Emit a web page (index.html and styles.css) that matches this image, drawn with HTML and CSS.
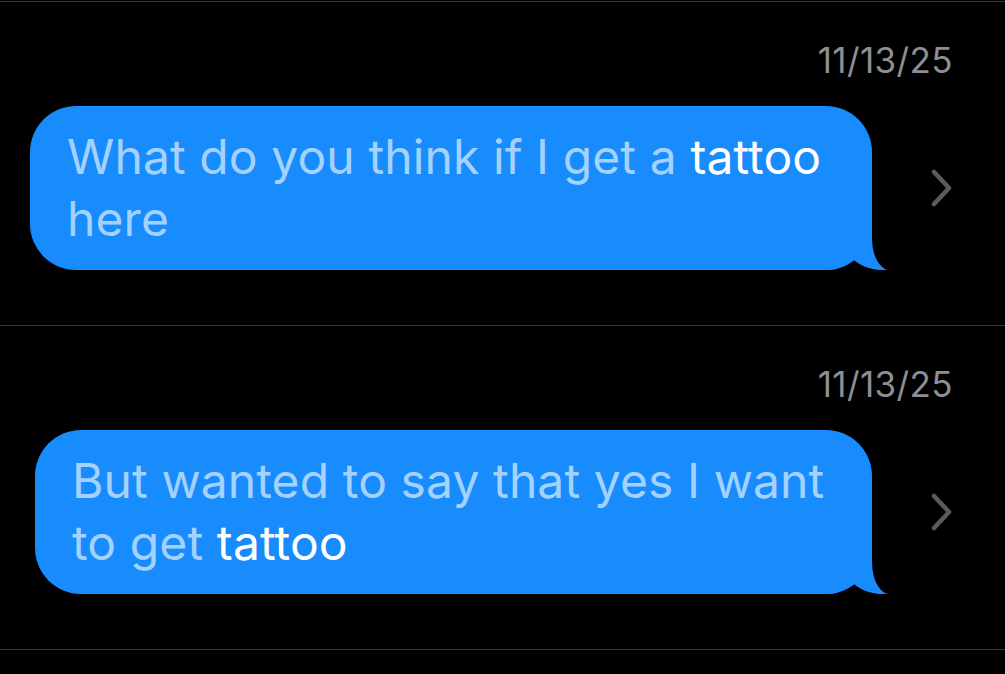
FILE: index.html
```html
<html>
<head>
<title>Messages</title>
<link rel="stylesheet" href="styles.css">
</head>
<body>

<div id="thread">

	<div class="row">
		<div class="date">11/13/25</div>
		<div class="line">
			<div class="bubble">
				What do you think if I get a <span class="hilite">tattoo</span> here
				<svg class="tail" width="57" height="45" viewBox="0 0 57 45"><path d="M0 0 L42 0 L42 12 C42 30 48 41 57 45 C45 46 30 42 22 33 C16 40 8 45 0 45 Z" fill="#188bfd"/></svg>
			</div>
			<svg class="chevron" width="22" height="38" viewBox="0 0 22 38"><polyline points="3,3 18,19 3,35" fill="none" stroke="#5b5b5e" stroke-width="4.5" stroke-linecap="round" stroke-linejoin="round"/></svg>
		</div>
	</div>

	<div class="row">
		<div class="date">11/13/25</div>
		<div class="line">
			<div class="bubble shifted">
				But wanted to say that yes I want to get <span class="hilite">tattoo</span>
				<svg class="tail" width="57" height="45" viewBox="0 0 57 45"><path d="M0 0 L42 0 L42 12 C42 30 48 41 57 45 C45 46 30 42 22 33 C16 40 8 45 0 45 Z" fill="#188bfd"/></svg>
			</div>
			<svg class="chevron" width="22" height="38" viewBox="0 0 22 38"><polyline points="3,3 18,19 3,35" fill="none" stroke="#5b5b5e" stroke-width="4.5" stroke-linecap="round" stroke-linejoin="round"/></svg>
		</div>
	</div>

	<div class="row last"></div>

</div> <!-- ends div#thread -->

</body>
</html>
```

FILE: styles.css
```css
body{
	margin: 0;
	background: black;
	font-family: "Inter", "Liberation Sans", sans-serif;
}

#thread{
	padding-top: 1px;
}

.row{
	border-top: 1px solid #38383a;
	height: 323px;
	padding: 0 52px 0 30px;
}

.row.last{
	height: 20px;
}

.date{
	text-align: right;
	color: #8e8e93;
	font-size: 35px;
	line-height: 40px;
	padding-top: 38px;
	letter-spacing: 0.4px;
}

.line{
	display: flex;
	align-items: center;
	margin-top: 26px;
}

.bubble{
	position: relative;
	width: 805px;
	background: #188bfd;
	border-radius: 46px;
	padding: 20px 0 20px 37px;
	color: #a3d2ff;
	font-size: 48px;
	line-height: 62px;
	letter-spacing: 0.1px;
}

.bubble.shifted{
	margin-left: 5px;
	width: 800px;
}

.hilite{
	color: white;
}

.tail{
	position: absolute;
	right: -15px;
	bottom: 0;
}

.chevron{
	margin-left: auto;
}
```
